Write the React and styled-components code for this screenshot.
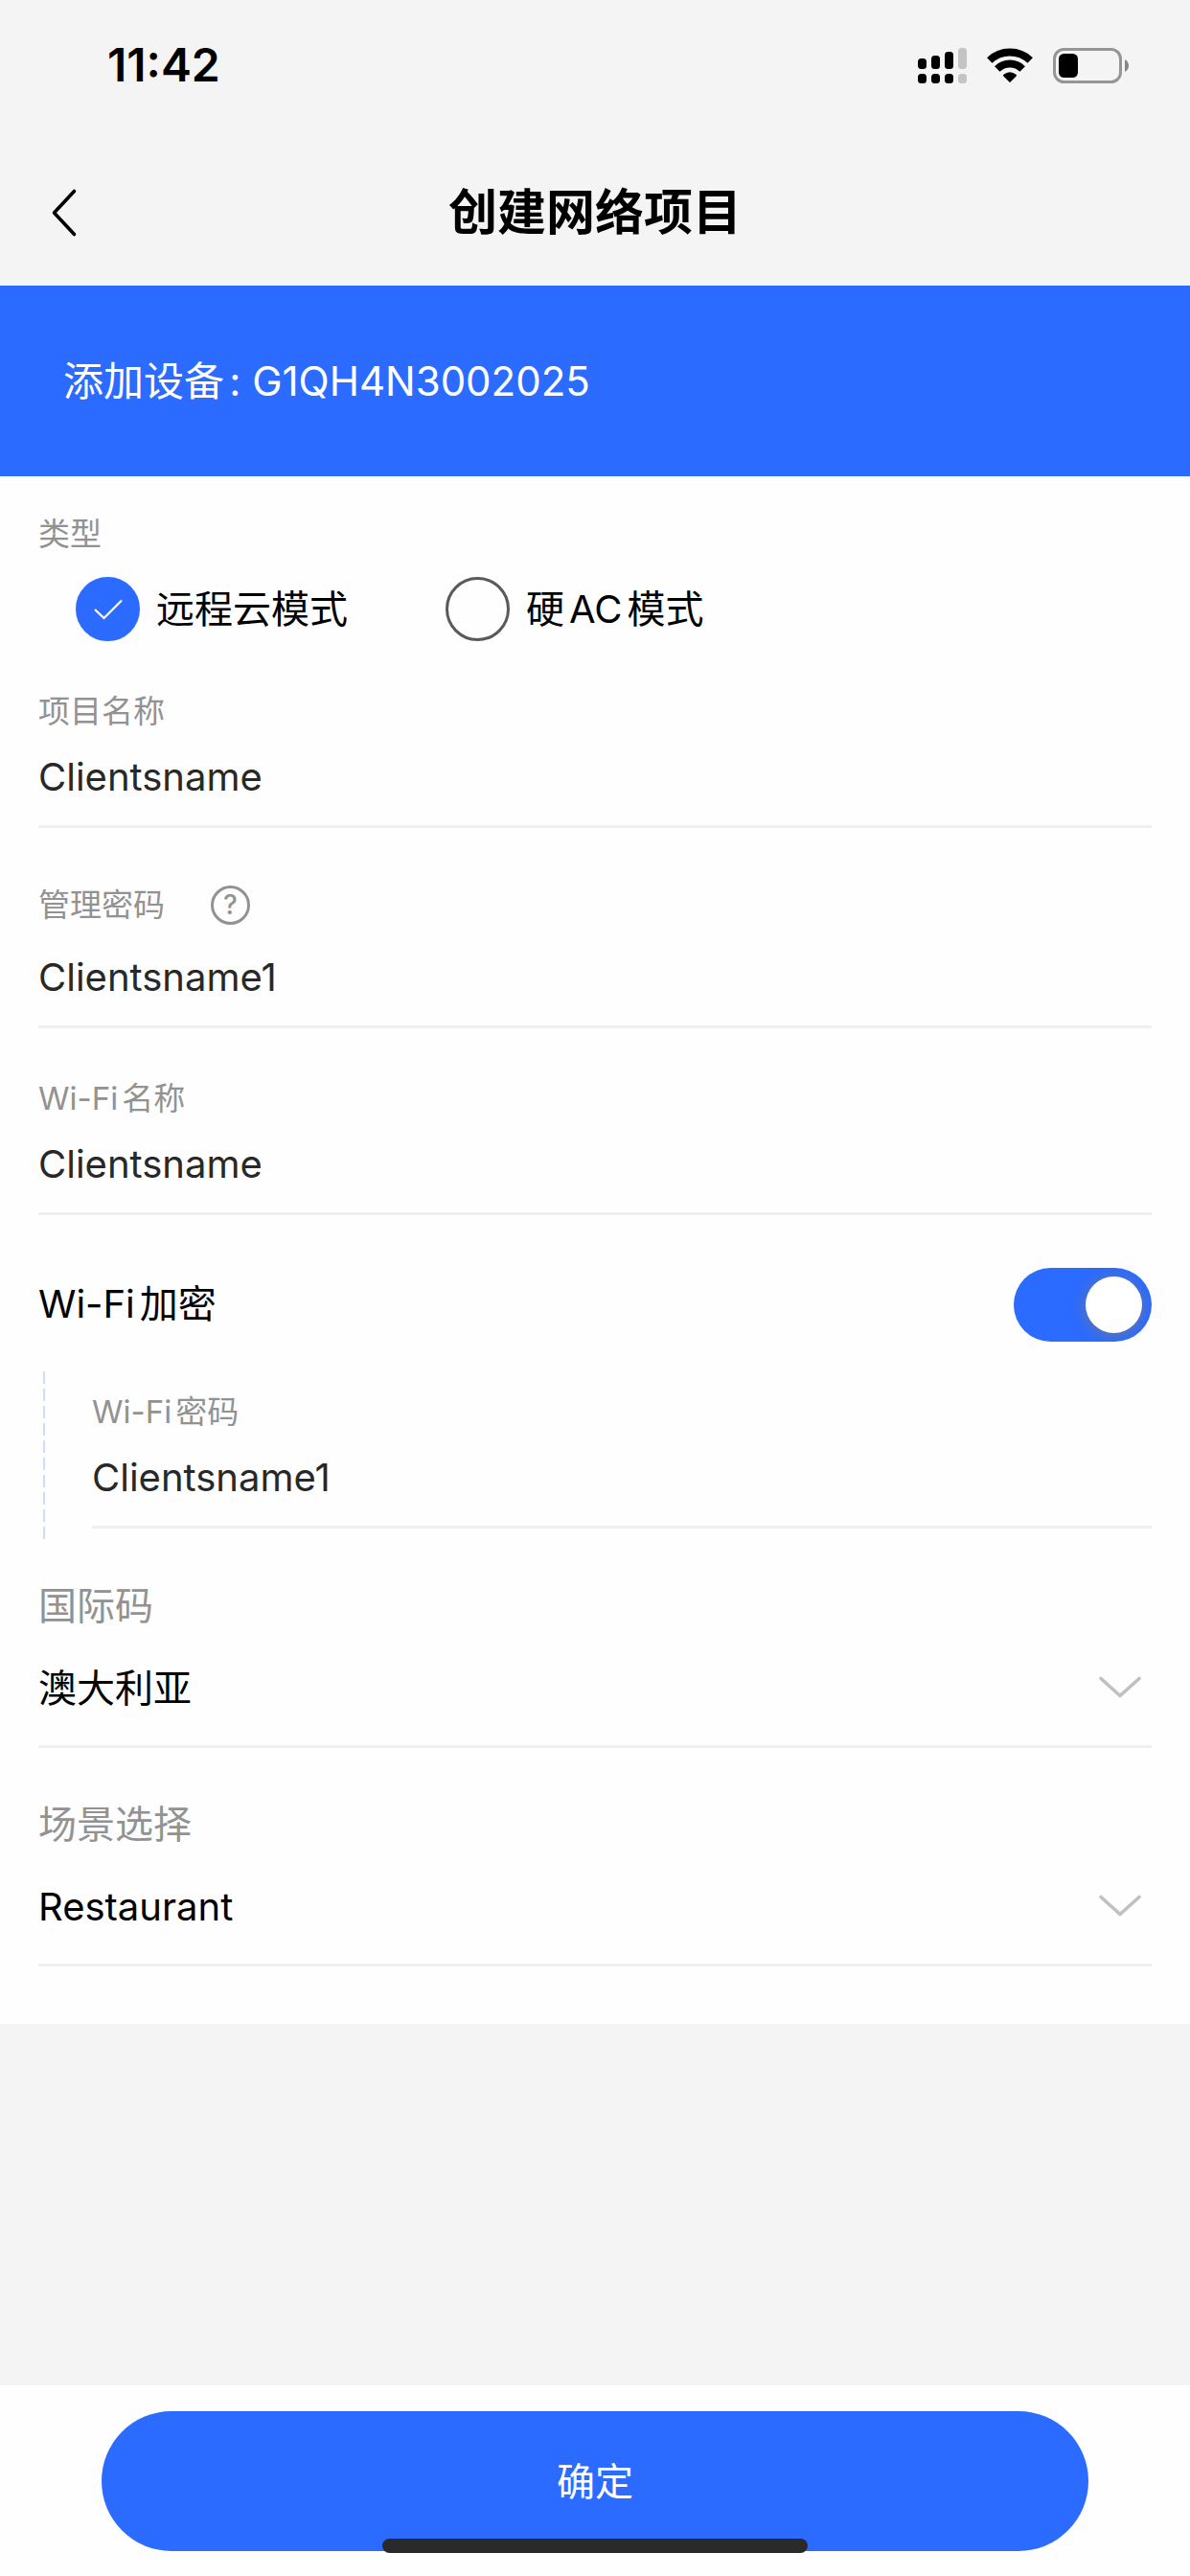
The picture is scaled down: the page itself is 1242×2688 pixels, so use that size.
import React, { useState } from "react";
import styled, { createGlobalStyle } from "styled-components";

const color = {
  blue: "#2c6bff",
  page: "#f4f4f4",
  surface: "#fefefe",
  line: "#efefef",
  label: "#929292",
  value: "#282828",
};

const GlobalStyle = createGlobalStyle`
  *, *::before, *::after { box-sizing: border-box; }
  body {
    margin: 0;
    background: ${color.page};
    color: #000;
    font-family: Inter, "Noto Sans CJK SC", sans-serif;
    text-autospace: normal;
  }
  button, input, select { font: inherit; color: inherit; }
`;

const Page = styled.div`
  display: flex;
  flex-direction: column;
  min-height: 100vh;
`;

const StatusBar = styled.div`
  display: flex;
  align-items: center;
  justify-content: space-between;
  height: 146px;
  padding: 0 64px 10px 112px;
`;

const Clock = styled.time`
  font-size: 48px;
  line-height: 56px;
  font-weight: 600;
`;

const StatusIcons = styled.div`
  display: flex;
  align-items: center;
  gap: 21px;
`;

const NavBar = styled.header`
  display: grid;
  grid-template-columns: 1fr auto 1fr;
  align-items: center;
  height: 152px;
  padding: 0 40px;
`;

const BackButton = styled.button`
  justify-self: start;
  display: flex;
  padding: 12px;
  border: 0;
  background: none;
`;

const Title = styled.h1`
  margin: 0;
  font-size: 51px;
  line-height: 72px;
  font-weight: 600;
`;

const DeviceBanner = styled.p`
  margin: 0;
  padding: 68px 66px 67px;
  background: ${color.blue};
  color: #fff;
  font-size: 42px;
  line-height: 64px;
`;

const Form = styled.form`
  display: flex;
  flex-direction: column;
  padding: 38px 40px 6px;
  background: ${color.surface};
`;

const ModeGroup = styled.fieldset`
  margin: 0 0 51px;
  padding: 0;
  border: 0;
`;

const labelText = `
  color: ${color.label};
  font-size: 33px;
  line-height: 44px;
`;

const Legend = styled.legend`
  ${labelText}
  padding: 0;
  margin-bottom: 23px;
`;

const ModeList = styled.div`
  display: flex;
  gap: 102px;
  padding-left: 39px;
`;

const ModeOption = styled.label`
  display: flex;
  align-items: center;
  gap: 17px;
  font-size: 40px;
  line-height: 60px;
  height: 67px;
`;

const RadioBox = styled.span`
  display: grid;
  place-items: center;
  & > * { grid-area: 1 / 1; }
`;

const Radio = styled.input`
  appearance: none;
  width: 67px;
  height: 67px;
  margin: 0;
  border: 3px solid #595959;
  border-radius: 50%;
  &:checked {
    border-color: ${color.blue};
    background: ${color.blue};
  }
`;

const FieldBox = styled.div`
  display: flex;
  flex-direction: column;
  padding-bottom: 17px;
  margin-bottom: ${(p) => (p.$last ? 0 : 51)}px;
  border-bottom: 3px solid ${color.line};
`;

const LabelRow = styled.div`
  display: flex;
  align-items: center;
  gap: 48px;
  min-height: ${(p) => (p.$tall ? 58 : 44)}px;
  margin-bottom: 12px;
`;

const FieldLabel = styled.label`
  ${labelText}
`;

const HelpButton = styled.button`
  display: grid;
  place-items: center;
  width: 41px;
  height: 41px;
  padding: 0;
  border: 3px solid ${color.label};
  border-radius: 50%;
  background: none;
  color: ${color.label};
  font-size: 28px;
  line-height: 35px;
  font-weight: 500;
`;

const TextInput = styled.input`
  width: 100%;
  height: 68px;
  padding: 0;
  border: 0;
  outline: 0;
  background: none;
  color: ${color.value};
  font-size: 40px;
`;

const SwitchRow = styled.div`
  display: flex;
  align-items: center;
  justify-content: space-between;
  height: 84px;
  margin-bottom: 28px;
  font-size: 40px;
  line-height: 60px;
`;

const Switch = styled.input`
  appearance: none;
  display: flex;
  align-items: center;
  justify-content: ${(p) => (p.checked ? "flex-end" : "flex-start")};
  width: 144px;
  height: 77px;
  margin: 0;
  padding: 0 10px;
  border-radius: 39px;
  overflow: hidden;
  background: ${(p) => (p.checked ? color.blue : "#d8d8d8")};
  &::before {
    content: "";
    width: 59px;
    height: 59px;
    border-radius: 50%;
    background: #fff;
    box-shadow: 0 2px 14px rgba(120, 120, 120, 0.8);
  }
`;

const NestedBlock = styled.div`
  display: flex;
  gap: 49px;
  margin-bottom: 41px;
  padding-left: 5px;
`;

const DashedRule = styled.div`
  width: 2px;
  background: repeating-linear-gradient(#cfdcff 0 13px, transparent 13px 18px);
`;

const NestedContent = styled.div`
  flex: 1;
  padding: 20px 0 14px;
`;

const SelectBox = styled.div`
  display: flex;
  flex-direction: column;
  gap: 25px;
  margin-bottom: 54px;
  padding-bottom: 26px;
  border-bottom: 3px solid ${color.line};
`;

const SelectLabel = styled.label`
  color: ${color.label};
  font-size: 40px;
  line-height: 52px;
`;

const SelectControl = styled.div`
  display: grid;
  align-items: center;
  & > * { grid-area: 1 / 1; }
  & > svg {
    justify-self: end;
    margin-right: 10px;
    pointer-events: none;
  }
`;

const Select = styled.select`
  appearance: none;
  width: 100%;
  height: 68px;
  padding: 0;
  border: 0;
  outline: 0;
  background: none;
  font-size: 40px;
`;

const Footer = styled.footer`
  display: flex;
  margin-top: auto;
  padding: 27px 106px 26px;
  background: ${color.surface};
`;

const SubmitButton = styled.button`
  flex: 1;
  height: 146px;
  padding: 0 0 4px;
  border: 0;
  border-radius: 73px;
  background: ${color.blue};
  color: #fff;
  font-size: 40px;
`;

const HomeIndicator = styled.div`
  position: fixed;
  bottom: 24px;
  left: 50%;
  width: 444px;
  height: 15px;
  margin-left: -222px;
  border-radius: 8px;
  background: #2a2a2a;
`;

const SignalIcon = () => (
  <svg width="51" height="37" viewBox="0 0 51 37" aria-hidden="true">
    <rect x="0" y="11" width="9" height="11" rx="3.5" />
    <rect x="14" y="8" width="9" height="14" rx="3.5" />
    <rect x="28" y="4" width="9" height="18" rx="3.5" />
    <rect x="42" y="0" width="9" height="22" rx="3.5" fill="#c4c4c4" />
    <rect x="0" y="27" width="9" height="10" rx="3.5" />
    <rect x="14" y="27" width="9" height="10" rx="3.5" />
    <rect x="28" y="27" width="9" height="10" rx="3.5" />
    <rect x="42" y="27" width="9" height="10" rx="3.5" fill="#c4c4c4" />
  </svg>
);

const WifiIcon = () => (
  <svg width="48" height="37" viewBox="0 0 48 37" aria-hidden="true">
    <g fill="none" stroke="#000" strokeWidth="7.8">
      <path d="M2.8 13A30.7 30.7 0 0 1 45.2 13" />
      <path d="M10.8 22A18.6 18.6 0 0 1 37.2 22" />
    </g>
    <path d="M17.4 29.6Q16.4 28.6 17.5 27.8Q24 22.6 30.5 27.8Q31.6 28.6 30.6 29.6L24.6 35.6Q24 36.2 23.4 35.6Z" />
  </svg>
);

const BatteryIcon = () => (
  <svg width="79" height="37" viewBox="0 0 79 37" aria-hidden="true">
    <rect x="1.5" y="1.5" width="69" height="34" rx="10" fill="none" stroke="#959595" strokeWidth="3" />
    <rect x="6" y="6" width="20" height="25" rx="5.5" />
    <path d="M75 12Q79 14.500 79 18.500T75 25Z" fill="#868686" />
  </svg>
);

const BackIcon = () => (
  <svg width="30" height="52" viewBox="0 0 30 52" aria-hidden="true">
    <path d="M25.500 3.500L4.500 26L25.500 48.500" fill="none" stroke="#000" strokeWidth="3.6" strokeLinecap="round" strokeLinejoin="round" />
  </svg>
);

const CheckIcon = () => (
  <svg width="30" height="22" viewBox="0 0 30 22" aria-hidden="true">
    <path d="M1 11L10.500 20L29 1.500" fill="none" stroke="#fff" strokeWidth="2.2" />
  </svg>
);

const ChevronIcon = () => (
  <svg width="46" height="26" viewBox="0 0 46 26" aria-hidden="true">
    <path d="M3 3.500L23 21.500L43 3.500" fill="none" stroke="#c0c0c0" strokeWidth="3.600" strokeLinecap="round" strokeLinejoin="round" />
  </svg>
);

function TextField({ id, label, initial, help, last }) {
  const [value, setValue] = useState(initial);
  return (
    <FieldBox $last={last}>
      <LabelRow $tall={help}>
        <FieldLabel htmlFor={id}>{label}</FieldLabel>
        {help && <HelpButton type="button">?</HelpButton>}
      </LabelRow>
      <TextInput id={id} value={value} onChange={(e) => setValue(e.target.value)} />
    </FieldBox>
  );
}

function SelectField({ id, label, options }) {
  return (
    <SelectBox>
      <SelectLabel htmlFor={id}>{label}</SelectLabel>
      <SelectControl>
        <Select id={id}>
          {options.map((o) => (
            <option key={o}>{o}</option>
          ))}
        </Select>
        <ChevronIcon />
      </SelectControl>
    </SelectBox>
  );
}

const modes = ["远程云模式", "硬AC模式"];

export default function App() {
  const [mode, setMode] = useState(modes[0]);
  const [encrypted, setEncrypted] = useState(true);
  return (
    <Page lang="zh-CN">
      <GlobalStyle />
      <StatusBar>
        <Clock>11:42</Clock>
        <StatusIcons>
          <SignalIcon />
          <WifiIcon />
          <BatteryIcon />
        </StatusIcons>
      </StatusBar>
      <NavBar>
        <BackButton type="button">
          <BackIcon />
        </BackButton>
        <Title>创建网络项目</Title>
      </NavBar>
      <DeviceBanner>添加设备: G1QH4N3002025</DeviceBanner>
      <Form id="project" onSubmit={(e) => e.preventDefault()}>
        <ModeGroup>
          <Legend>类型</Legend>
          <ModeList>
            {modes.map((m) => (
              <ModeOption key={m}>
                <RadioBox>
                  <Radio type="radio" name="mode" checked={mode === m} onChange={() => setMode(m)} />
                  {mode === m && <CheckIcon />}
                </RadioBox>
                {m}
              </ModeOption>
            ))}
          </ModeList>
        </ModeGroup>
        <TextField id="project-name" label="项目名称" initial="Clientsname" />
        <TextField id="admin-password" label="管理密码" initial="Clientsname1" help />
        <TextField id="wifi-name" label="Wi-Fi名称" initial="Clientsname" />
        <SwitchRow>
          <label htmlFor="wifi-encryption">Wi-Fi加密</label>
          <Switch
            id="wifi-encryption"
            type="checkbox"
            role="switch"
            checked={encrypted}
            onChange={(e) => setEncrypted(e.target.checked)}
          />
        </SwitchRow>
        {encrypted && (
          <NestedBlock>
            <DashedRule />
            <NestedContent>
              <TextField id="wifi-password" label="Wi-Fi密码" initial="Clientsname1" last />
            </NestedContent>
          </NestedBlock>
        )}
        <SelectField id="country" label="国际码" options={["澳大利亚"]} />
        <SelectField id="scene" label="场景选择" options={["Restaurant"]} />
      </Form>
      <Footer>
        <SubmitButton type="submit" form="project">确定</SubmitButton>
      </Footer>
      <HomeIndicator />
    </Page>
  );
}
